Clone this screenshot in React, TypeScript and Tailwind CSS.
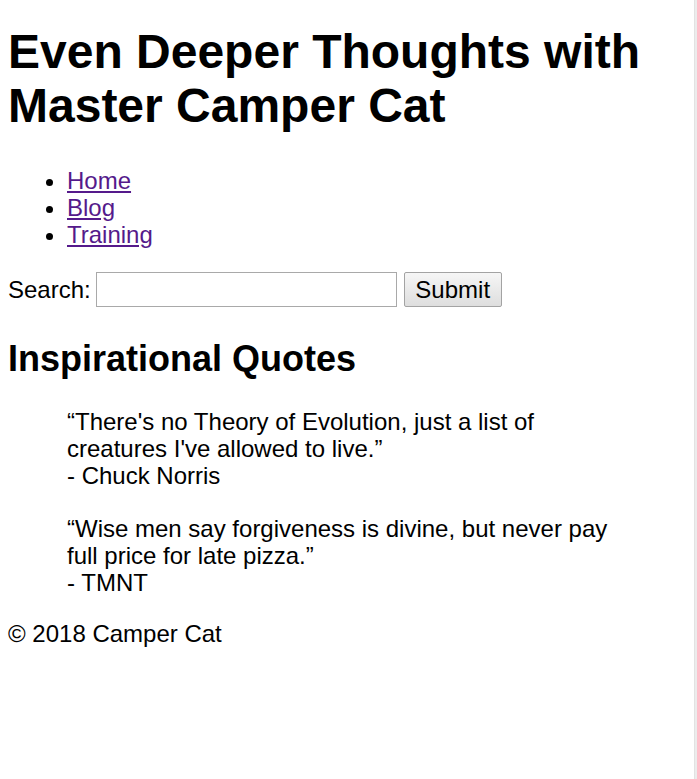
import React from 'react';

const quotes = [
  {
    text: "“There's no Theory of Evolution, just a list of creatures I've allowed to live.”",
    by: '- Chuck Norris',
  },
  {
    text: '“Wise men say forgiveness is divine, but never pay full price for late pizza.”',
    by: '- TMNT',
  },
];

const links = ['Home', 'Blog', 'Training'];

export default function App() {
  return (
    <div className="flex min-h-screen bg-white text-black font-['Liberation_Sans',Arial,sans-serif]">
      <div className="flex-1 px-[8px] pt-[25px] text-[24px] leading-[27px]">
        <header>
          <h1 className="text-[48px] leading-[54px] font-bold">Even Deeper Thoughts with Master Camper Cat</h1>
          <nav>
            <ul className="mt-[34px] pl-[59px] list-disc">
              {links.map((l) => (
                <li key={l}>
                  <a href="#" className="text-[#551a8b] underline">
                    {l}
                  </a>
                </li>
              ))}
            </ul>
          </nav>
        </header>

        <form className="mt-[24px] flex items-center" onSubmit={(e) => e.preventDefault()}>
          <label htmlFor="search" className="mr-[5px]">
            Search:
          </label>
          <input
            id="search"
            type="search"
            className="w-[301px] h-[35px] border border-[#a9a9a9] bg-white"
          />
          <button
            type="submit"
            className="ml-[7px] w-[98px] h-[35px] border border-[#a3a3a3] rounded-[2px] bg-gradient-to-b from-[#f6f6f6] to-[#dedede] text-[24px] leading-[27px]"
          >
            Submit
          </button>
        </form>

        <main>
          <h2 className="mt-[32px] text-[36px] leading-[40px] font-bold">Inspirational Quotes</h2>
          {quotes.map((q, i) => (
            <blockquote key={i} className={i === 0 ? 'mt-[29px] mx-[59px]' : 'mt-[26px] mx-[59px]'}>
              <p>
                {q.text}
                <br />
                {q.by}
              </p>
            </blockquote>
          ))}
        </main>

        <footer className="mt-[24px]">© 2018 Camper Cat</footer>
      </div>
      <div className="w-[3px] bg-[#ececec] border-l border-[#e2e2e2]" />
    </div>
  );
}
